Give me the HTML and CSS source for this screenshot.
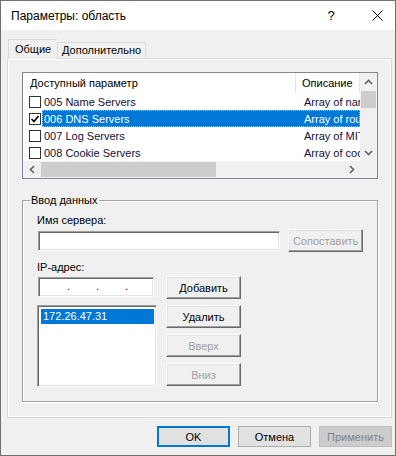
FILE: index.html
```html
<!DOCTYPE html>
<html lang="ru">
<head>
  <meta charset="UTF-8">
  <title>Параметры: область</title>
  <link rel="stylesheet" href="styles.css">
</head>
<body>

  <div class="window">

    <div class="titlebar">
      <span class="title">Параметры: область</span>
      <span class="help">?</span>
      <span class="close">
        <svg width="11" height="11" viewBox="0 0 11 11"><path d="M0.5 0.5 L10.5 10.5 M10.5 0.5 L0.5 10.5" stroke="#000" stroke-width="1" fill="none"/></svg>
      </span>
    </div>

    <div class="tabs">
      <div class="tab active">Общие</div>
      <div class="tab">Дополнительно</div>
    </div>

    <div class="panel">

      <div class="listview">
        <div class="lv-content">
          <div class="lv-head">
            <div class="col-name">Доступный параметр</div>
            <div class="col-desc">Описание</div>
          </div>
          <div class="row">
            <span class="cb"></span>
            <div class="cells"><span class="name">005 Name Servers</span><span class="desc">Array of name servers</span></div>
          </div>
          <div class="row selected">
            <span class="cb"><svg width="10" height="10" viewBox="0 0 10 10"><path d="M1.5 5 L4 7.5 L8.5 2" stroke="#000" stroke-width="1.7" fill="none"/></svg></span>
            <div class="cells"><span class="name">006 DNS Servers</span><span class="desc">Array of router addresses</span></div>
          </div>
          <div class="row">
            <span class="cb"></span>
            <div class="cells"><span class="name">007 Log Servers</span><span class="desc">Array of MIT log servers</span></div>
          </div>
          <div class="row">
            <span class="cb"></span>
            <div class="cells"><span class="name">008 Cookie Servers</span><span class="desc">Array of cookie servers</span></div>
          </div>
        </div>

        <div class="vscroll">
          <div class="arrow"><svg width="9" height="6" viewBox="0 0 9 6"><path d="M1 5 L4.5 1.5 L8 5" stroke="#606060" stroke-width="1.6" fill="none"/></svg></div>
          <div class="vtrack"><div class="vthumb"></div></div>
          <div class="arrow"><svg width="9" height="6" viewBox="0 0 9 6"><path d="M1 1 L4.5 4.5 L8 1" stroke="#606060" stroke-width="1.6" fill="none"/></svg></div>
        </div>

        <div class="hscroll">
          <div class="arrow"><svg width="6" height="9" viewBox="0 0 6 9"><path d="M5 1 L1.5 4.5 L5 8" stroke="#606060" stroke-width="1.6" fill="none"/></svg></div>
          <div class="htrack"><div class="hthumb"></div></div>
          <div class="arrow"><svg width="6" height="9" viewBox="0 0 6 9"><path d="M1 1 L4.5 4.5 L1 8" stroke="#606060" stroke-width="1.6" fill="none"/></svg></div>
        </div>

        <div class="corner"></div>
      </div>

      <div class="group">
        <div class="group-title">Ввод данных</div>

        <div class="label first">Имя сервера:</div>
        <div class="line">
          <div class="edit server"></div>
          <button class="btn3d" disabled>Сопоставить</button>
        </div>

        <div class="label">IP-адрес:</div>
        <div class="ip-grid">
          <div class="left-col">
            <div class="edit ip">
              <span class="dot">.</span><span class="dot">.</span><span class="dot">.</span>
            </div>
            <div class="listbox">
              <div class="item selected">172.26.47.31</div>
            </div>
          </div>
          <div class="right-col">
            <button class="btn3d">Добавить</button>
            <button class="btn3d">Удалить</button>
            <button class="btn3d" disabled>Вверх</button>
            <button class="btn3d" disabled>Вниз</button>
          </div>
        </div>
      </div>

    </div>

    <div class="footer">
      <button class="btn default">OK</button>
      <button class="btn">Отмена</button>
      <button class="btn" disabled>Применить</button>
    </div>

  </div>

</body>
</html>
```

FILE: styles.css
```css
* {
  margin: 0;
  padding: 0;
  box-sizing: border-box;
}

body {
  font-family: "Liberation Sans", Arial, sans-serif;
  font-size: 11px;
  color: #000;
  background: #fff;
}

.window {
  width: 396px;
  height: 456px;
  border: 1px solid #707070;
  background: #f0f0f0;
  display: flex;
  flex-direction: column;
}

/* title bar */
.titlebar {
  height: 29px;
  background: #fff;
  display: flex;
  align-items: center;
}

.title {
  flex: 1;
  font-size: 12px;
  padding-left: 10px;
}

.help {
  width: 40px;
  margin-right: 8px;
  text-align: center;
  font-size: 13px;
}

.close {
  width: 36px;
  display: flex;
  justify-content: center;
}

/* tabs */
.tabs {
  display: flex;
  align-items: flex-end;
  height: 19px;
  margin: 9px 0 0 7px;
  position: relative;
  z-index: 1;
}

.tab {
  height: 16px;
  line-height: 15px;
  padding: 0 4px;
  border: 1px solid #d9d9d9;
  border-bottom: none;
  background: #f0f0f0;
}

.tab.active {
  width: 49px;
  height: 20px;
  line-height: 18px;
  padding: 0 6px;
  margin-bottom: -1px;
  border-right: none;
  background: #f0f0f0;
}

.tab + .tab {
  width: 89px;
}

/* tab page */
.panel {
  width: 385px;
  height: 360px;
  margin-left: 6px;
  padding: 13px 0 0 14px;
  border: 1px solid #d9d9d9;
  box-shadow: inset 1px 1px 0 #fff, inset -1px -1px 0 #fff;
}

/* list view */
.listview {
  width: 356px;
  height: 107px;
  border: 1px solid #828790;
  background: #fff;
  display: grid;
  grid-template-columns: 337px 17px;
  grid-template-rows: 88px 17px;
}

.lv-content {
  overflow: hidden;
}

.lv-head {
  display: flex;
  height: 20px;
  line-height: 20px;
}

.lv-head .col-name {
  width: 273px;
  padding-left: 7px;
  border-right: 1px solid #e5e5e5;
}

.lv-head .col-desc {
  width: 64px;
  padding-left: 6px;
  border-right: 1px solid #e5e5e5;
}

.row {
  display: flex;
  align-items: center;
  height: 17px;
  color: #10103a;
}

.cb {
  width: 12px;
  height: 12px;
  margin: 0 1px 0 6px;
  border: 1px solid #333;
  background: #fff;
  display: flex;
  align-items: center;
  justify-content: center;
}

.cells {
  flex: 1;
  height: 17px;
  display: flex;
  align-items: center;
  white-space: nowrap;
  overflow: hidden;
}

.cells .name {
  width: 254px;
  padding-left: 2px;
}

.cells .desc {
  width: 64px;
  padding-left: 8px;
  overflow: hidden;
}

.row.selected .cells {
  background: #0078d7;
  color: #fff;
  outline: 1px dotted #9cc3e8;
  outline-offset: -1px;
}

.vscroll {
  background: #f0f0f0;
  display: flex;
  flex-direction: column;
}

.vscroll .arrow {
  height: 17px;
  display: flex;
  align-items: center;
  justify-content: center;
}

.vtrack {
  flex: 1;
  padding: 1px 1px 0 1px;
}

.vthumb {
  height: 17px;
  background: #cdcdcd;
}

.hscroll {
  background: #f0f0f0;
  display: flex;
}

.hscroll .arrow {
  width: 17px;
  display: flex;
  align-items: center;
  justify-content: center;
}

.htrack {
  flex: 1;
  padding: 1px 0 1px 1px;
}

.hthumb {
  width: 175px;
  height: 15px;
  background: #cdcdcd;
}

.corner {
  background: #f0f0f0;
}

/* group box */
.group {
  width: 356px;
  height: 202px;
  margin-top: 21px;
  padding: 0 14px;
  border: 1px solid #a0a0a0;
  box-shadow: 1px 1px 0 #fff, inset 1px 1px 0 #fff;
}

.group-title {
  display: table;
  margin: -7px 0 0 -7px;
  padding: 0 1px;
  line-height: 13px;
  background: #f0f0f0;
}

.label {
  line-height: 13px;
  margin-top: 9px;
}

.label.first {
  margin-top: 7px;
}

.line {
  display: flex;
  align-items: center;
  gap: 8px;
  margin-top: 2px;
}

.edit {
  height: 20px;
  background: #fff;
  border: 1px solid;
  border-color: #a0a0a0 #fff #fff #a0a0a0;
  box-shadow: inset 1px 1px 0 #696969, inset -1px -1px 0 #e3e3e3;
}

.edit.server {
  width: 243px;
  margin-left: 1px;
}

.btn3d {
  width: 75px;
  height: 23px;
  font: inherit;
  color: #000;
  background: #f0f0f0;
  border: 1px solid;
  border-color: #fff #696969 #696969 #fff;
  box-shadow: inset -1px -1px 0 #a0a0a0, inset 1px 1px 0 #e3e3e3;
}

.btn3d:disabled {
  color: #a0a0a0;
}

.ip-grid {
  display: flex;
  gap: 9px;
  margin-top: 2px;
}

.left-col {
  width: 120px;
}

.edit.ip {
  width: 116px;
  margin: 1px 0 0 1px;
  display: flex;
  padding-left: 28px;
  line-height: 17px;
}

.edit.ip .dot + .dot {
  margin-left: 26px;
}

.listbox {
  height: 82px;
  margin-top: 8px;
  padding: 3px 2px 0 3px;
  background: #fff;
  border: 1px solid;
  border-color: #a0a0a0 #fff #fff #a0a0a0;
  box-shadow: inset 1px 1px 0 #696969, inset -1px -1px 0 #e3e3e3;
}

.listbox .item {
  height: 15px;
  line-height: 15px;
  padding-left: 2px;
}

.listbox .item.selected {
  background: #0078d7;
  color: #fff;
}

.right-col {
  display: flex;
  flex-direction: column;
  gap: 6px;
}

/* bottom buttons */
.footer {
  display: flex;
  justify-content: flex-end;
  gap: 8px;
  margin-top: 8px;
  padding-right: 3px;
}

.btn {
  width: 73px;
  height: 21px;
  font: inherit;
  color: #000;
  background: #e1e1e1;
  border: 1px solid #adadad;
}

.btn.default {
  border: 2px solid #0078d7;
}

.btn:disabled {
  background: #cccccc;
  border-color: #bfbfbf;
  color: #838383;
}
```
